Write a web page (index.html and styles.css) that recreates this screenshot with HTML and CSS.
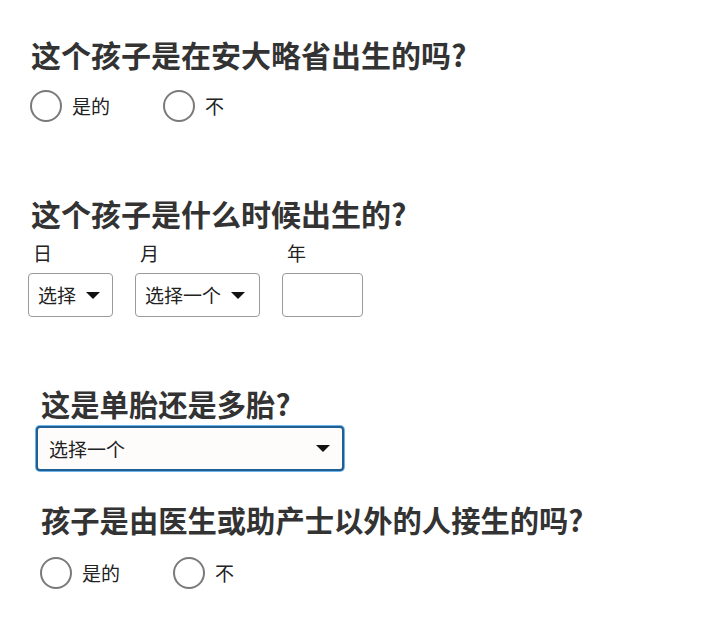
FILE: index.html
```html
<!DOCTYPE html>
<html lang="zh-CN">
<head>
<meta charset="utf-8">
<title>出生登记</title>
<link rel="stylesheet" href="styles.css">
</head>
<body>
<div class="page">
  <section class="q q1">
    <h2 class="title">这个孩子是在安大略省出生的吗?</h2>
    <div class="radios">
      <label class="opt"><span class="circle"></span><span class="opt-text">是的</span></label>
      <label class="opt"><span class="circle"></span><span class="opt-text">不</span></label>
    </div>
  </section>

  <section class="q q2">
    <h2 class="title">这个孩子是什么时候出生的?</h2>
    <div class="date-row">
      <div class="field">
        <div class="field-label">日</div>
        <div class="select sel-day"><span class="sel-text">选择</span><span class="caret"></span></div>
      </div>
      <div class="field">
        <div class="field-label">月</div>
        <div class="select sel-month"><span class="sel-text">选择一个</span><span class="caret"></span></div>
      </div>
      <div class="field">
        <div class="field-label">年</div>
        <div class="text-input"></div>
      </div>
    </div>
  </section>

  <div class="lower">
    <section class="q q3">
      <h2 class="title">这是单胎还是多胎?</h2>
      <div class="select sel-wide focused"><span class="sel-text">选择一个</span><span class="caret"></span></div>
    </section>

    <section class="q q4">
      <h2 class="title">孩子是由医生或助产士以外的人接生的吗?</h2>
      <div class="radios">
        <label class="opt"><span class="circle"></span><span class="opt-text">是的</span></label>
        <label class="opt"><span class="circle"></span><span class="opt-text">不</span></label>
      </div>
    </section>
  </div>
</div>
</body>
</html>
```

FILE: styles.css
```css
* {
  box-sizing: border-box;
}

html, body {
  margin: 0;
  padding: 0;
  background: #ffffff;
}

body {
  font-family: "Noto Sans CJK SC", "Noto Sans", "Liberation Sans", sans-serif;
  color: #222222;
}

.page {
  padding: 39px 0 0 30px;
}

.title {
  margin: 0;
  font-size: 29.3px;
  line-height: 30px;
  padding-bottom: 4px;
  font-weight: 700;
  color: #333333;
  padding-left: 1px;
}

.q1 .title,
.q2 .title {
  font-size: 30px;
}

/* radios */
.radios {
  display: flex;
  gap: 53px;
}

.opt {
  display: flex;
  align-items: center;
  gap: 10px;
  height: 32px;
}

.circle {
  width: 32px;
  height: 32px;
  border: 2px solid #7a7a7a;
  border-radius: 50%;
  background: #ffffff;
  flex: none;
}

.opt-text {
  font-size: 19px;
  line-height: 24px;
  color: #222222;
}

.q1 .radios {
  margin-top: 17px;
}

/* date */
.q2 {
  margin-top: 76px;
}

.date-row {
  display: flex;
  gap: 22px;
  margin-top: 9px;
  margin-left: -2px;
}

.field {
  display: flex;
  flex-direction: column;
}

.field-label {
  font-size: 19px;
  line-height: 24px;
  padding-left: 5px;
  margin-bottom: 8px;
  color: #222222;
}

.select {
  display: flex;
  align-items: center;
  height: 44px;
  border: 1px solid #9a9a9a;
  border-radius: 4px;
  background: #ffffff;
  padding: 0 11px 0 9px;
  font-size: 19px;
  color: #222222;
}

.sel-text {
  line-height: 24px;
}

.caret {
  width: 0;
  height: 0;
  border-left: 7px solid transparent;
  border-right: 7px solid transparent;
  border-top: 7px solid #111111;
  margin-left: 10px;
  flex: none;
}

.sel-day {
  width: 85px;
}

.sel-month {
  width: 125px;
}

.text-input {
  width: 81px;
  height: 44px;
  border: 1px solid #9a9a9a;
  border-radius: 4px;
  background: #ffffff;
}

/* lower sections */
.lower {
  padding-left: 10px;
}

.q3 {
  margin-top: 71px;
}

.sel-wide {
  width: 308px;
  height: 45px;
  margin-top: 4px;
  margin-left: -4px;
  justify-content: space-between;
  padding: 0 12px 0 11px;
}

.focused {
  border: 2px solid #1f5f93;
  box-shadow: 0 0 0 1px #6db3e6;
  background: #fdfcfb;
}

.q4 {
  margin-top: 33px;
}

.q4 .radios {
  margin-top: 19px;
}
```
